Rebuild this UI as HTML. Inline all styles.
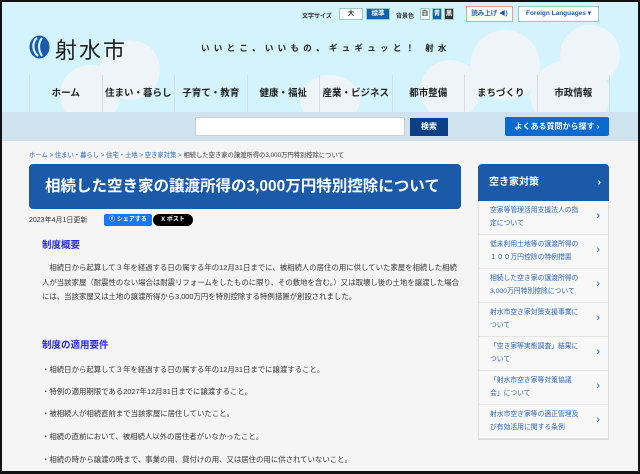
<!DOCTYPE html>
<html><head><meta charset="utf-8"><style>
*{margin:0;padding:0;box-sizing:border-box}
body{width:640px;height:474px;overflow:hidden;background:#f5f5f5;font-family:"Liberation Sans","Noto Sans CJK JP",sans-serif;color:#333;position:relative}
.a{position:absolute}
#hdr{left:0;top:0;width:640px;height:112px;background:#d3f4fc;overflow:hidden}
.cl{position:absolute;background:#eef4f7;border-radius:50%}
.nav{top:75px;height:37px;display:flex;left:29px;width:581px}
.nav div{flex:1;border-left:1px solid #d6dde0;text-align:center;font-size:9.5px;font-weight:bold;line-height:37px;color:#222}
.nav div:last-child{border-right:1px solid #d6dde0}
.btn{font-size:6.5px;border:1px solid #9cb;background:#fff;text-align:center;line-height:10px;height:12px;font-weight:bold}
.sb{left:478px;width:131px;background:#fff;border:1px solid #ddd;border-top:0}
.si{height:34px;border-bottom:1px solid #e4e4e4;font-size:6.8px;color:#2a63b3;padding:4px 20px 0 11px;line-height:12.5px;position:relative;background:#f8f8f8;overflow:hidden;white-space:nowrap}
.si:after{content:"›";position:absolute;right:8px;top:9px;font-size:11px;color:#2a63b3}
.p{left:42px;font-size:7.4px;color:#333;line-height:14.5px}
.h{left:42px;font-size:9.5px;font-weight:bold;color:#2a2ae0}
</style></head><body>
<div id="hdr" class="a">
<div class="cl" style="left:470px;top:30px;width:70px;height:70px"></div>
<div class="cl" style="left:420px;top:60px;width:60px;height:60px"></div>
<div class="cl" style="left:530px;top:60px;width:80px;height:70px"></div>
<div class="cl" style="left:560px;top:25px;width:60px;height:60px"></div>
<div class="cl" style="left:60px;top:65px;width:60px;height:60px"></div>
<div class="cl" style="left:100px;top:40px;width:60px;height:60px"></div>
<div class="cl" style="left:300px;top:75px;width:60px;height:50px"></div>
<div class="a nav">
<div>ホーム</div><div>住まい・暮らし</div><div>子育て・教育</div><div>健康・福祉</div><div>産業・ビジネス</div><div>都市整備</div><div>まちづくり</div><div>市政情報</div></div>
</div>
<div class="a" style="left:302px;top:11px;font-size:6px;font-weight:bold">文字サイズ</div>
<div class="a btn" style="left:339px;top:8px;width:24px">大</div>
<div class="a btn" style="left:366px;top:8px;width:24px;background:#0f63a8;color:#fff">標準</div>
<div class="a" style="left:396px;top:11px;font-size:6px;font-weight:bold">背景色</div>
<div class="a btn" style="left:420px;top:8px;width:10px">白</div>
<div class="a btn" style="left:432px;top:8px;width:10px;background:#0f63a8;color:#fff">青</div>
<div class="a btn" style="left:444px;top:8px;width:10px;background:#333;color:#fff">黒</div>
<div class="a btn" style="left:466px;top:6px;width:47px;height:16px;line-height:14px;color:#1a5aa8;border-color:#e0a0a0">読み上げ ◀)</div>
<div class="a btn" style="left:518px;top:6px;width:81px;height:16px;line-height:14px;color:#1a5aa8">Foreign Languages ▾</div>
<svg class="a" style="left:29px;top:35px" width="21" height="24" viewBox="0 0 21 24"><ellipse cx="10.5" cy="12" rx="10" ry="11.5" fill="#1a5aa8"/><path d="M8 3C3 7 3 16 9 21M13 3C9 8 9 15 13 21" stroke="#d3f4fc" stroke-width="2.2" fill="none"/></svg>
<div class="a" style="left:55px;top:33px;font-size:22px;letter-spacing:2px;color:#222">射水市</div>
<div class="a" style="left:201px;top:42px;font-size:8.5px;font-weight:bold;letter-spacing:4.3px;color:#222">いいとこ、いいもの、ギュギュッと！ 射水</div>
<div class="a" style="left:0;top:112px;width:640px;height:29px;background:#cfe3ef"></div>
<div class="a" style="left:195px;top:117px;width:210px;height:19px;background:#fff;border:1px solid #ccd"></div>
<div class="a" style="left:410px;top:118px;width:38px;height:18px;background:#0c3f86;color:#fff;font-size:8px;font-weight:bold;text-align:center;line-height:18px">検索</div>
<div class="a" style="left:505px;top:117px;width:104px;height:19px;background:#0a6ad0;color:#fff;font-size:8px;font-weight:bold;text-align:center;line-height:19px;border-radius:2px">よくある質問から探す ›</div>
<div class="a" style="left:29px;top:150px;font-size:6.3px;color:#2a63b3">ホーム &gt; 住まい・暮らし &gt; 住宅・土地 &gt; 空き家対策 &gt; <span style="color:#333">相続した空き家の譲渡所得の3,000万円特別控除について</span></div>
<div class="a" style="left:29px;top:164px;width:432px;height:45px;background:#1a5aa8;border-radius:4px;color:#fff;font-size:15.5px;font-weight:bold;line-height:45px;padding-left:16px">相続した空き家の譲渡所得の3,000万円特別控除について</div>
<div class="a" style="left:29px;top:215px;font-size:7px">2023年4月1日更新</div>
<div class="a" style="left:104px;top:214px;width:48px;height:12px;background:#1877f2;color:#fff;font-size:6px;border-radius:2px;text-align:center;line-height:12px;font-weight:bold">ⓕ シェアする</div>
<div class="a" style="left:153px;top:214px;width:40px;height:12px;background:#000;color:#fff;font-size:6px;border-radius:6px;text-align:center;line-height:12px;font-weight:bold">X ポスト</div>
<div class="a h" style="top:237px">制度概要</div>
<div class="a p" style="top:261px;width:420px">　相続日から起算して３年を経過する日の属する年の12月31日までに、被相続人の居住の用に供していた家屋を相続した相続人が当該家屋（耐震性のない場合は耐震リフォームをしたものに限り、その敷地を含む。）又は取壊し後の土地を譲渡した場合には、当該家屋又は土地の譲渡所得から3,000万円を特別控除する特例措置が創設されました。</div>
<div class="a h" style="top:337px">制度の適用要件</div>
<div class="a p" style="top:363px">・相続日から起算して３年を経過する日の属する年の12月31日までに譲渡すること。</div>
<div class="a p" style="top:385px">・特例の適用期限である2027年12月31日までに譲渡すること。</div>
<div class="a p" style="top:407px">・被相続人が相続直前まで当該家屋に居住していたこと。</div>
<div class="a p" style="top:430px">・相続の直前において、被相続人以外の居住者がいなかったこと。</div>
<div class="a p" style="top:453px">・相続の時から譲渡の時まで、事業の用、貸付けの用、又は居住の用に供されていないこと。</div>
<div class="a" style="left:478px;top:164px;width:131px;height:37px;background:#1a5aa8;border-radius:4px 4px 0 0;color:#fff;font-size:10px;font-weight:bold;line-height:37px;padding-left:11px">空き家対策<span style="position:absolute;right:8px">›</span></div>
<div class="a sb" style="top:201px">
<div class="si">空家等管理活用支援法人の指<br>定について</div>
<div class="si">低未利用土地等の譲渡所得の<br>１００万円控除の特例措置</div>
<div class="si">相続した空き家の譲渡所得の<br>3,000万円特別控除について</div>
<div class="si">射水市空き家対策支援事業に<br>ついて</div>
<div class="si">「空き家等実態調査」結果に<br>ついて</div>
<div class="si">「射水市空き家等対策協議<br>会」について</div>
<div class="si">射水市空き家等の適正管理及<br>び有効活用に関する条例</div>
</div>
<div class="a" style="left:0;top:0;width:640px;height:474px;border:2px solid #111;border-bottom-width:3px;pointer-events:none"></div>
</body></html>
